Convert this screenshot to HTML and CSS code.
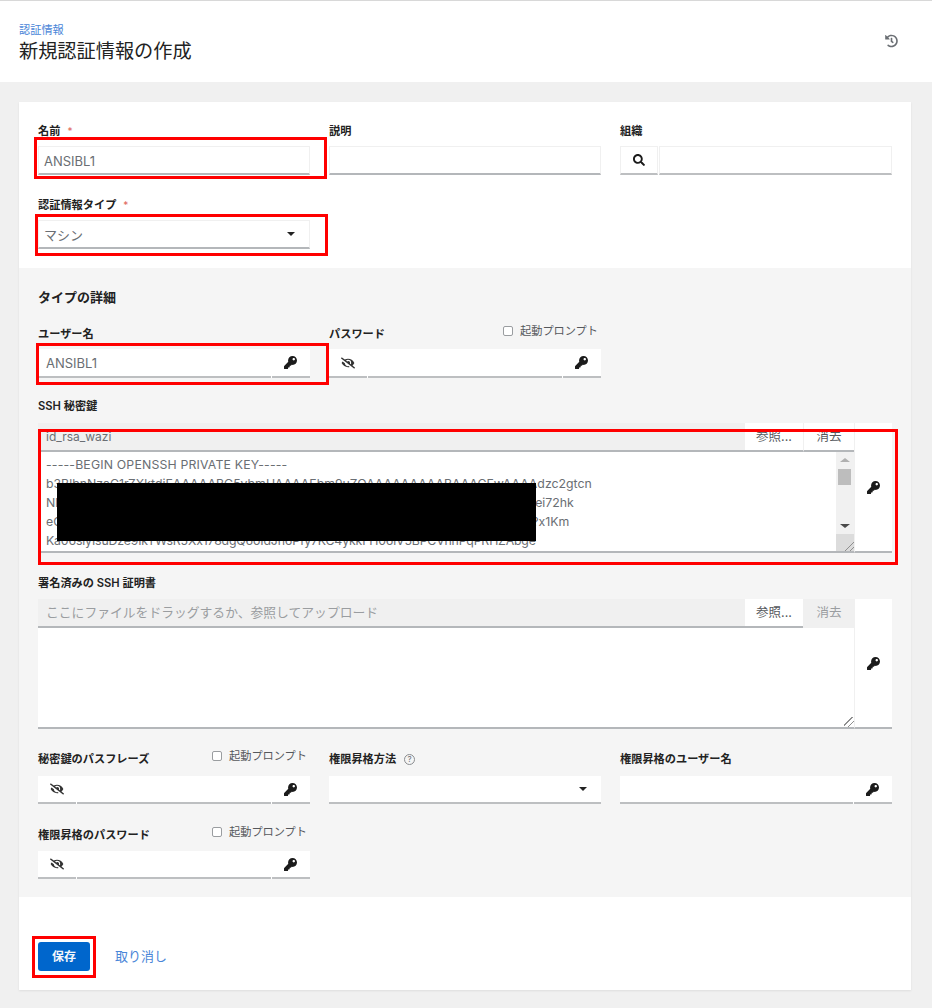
FILE: index.html
```html
<!DOCTYPE html>
<html lang="ja">
<head>
<meta charset="utf-8">
<title>新規認証情報の作成</title>
<link rel="stylesheet" href="styles.css">
</head>
<body>
<svg class="defs" aria-hidden="true">
  <symbol id="i-key" viewBox="0 0 512 512"><path d="M512 176.001C512 273.203 433.202 352 336 352c-11.22 0-22.19-1.062-32.827-3.069l-24.012 27.014A23.999 23.999 0 0 1 261.223 384H224v40c0 13.255-10.745 24-24 24h-40v40c0 13.255-10.745 24-24 24H24c-13.255 0-24-10.745-24-24v-78.059c0-6.365 2.529-12.47 7.029-16.971l161.802-161.802C163.108 213.814 160 195.271 160 176 160 78.798 238.797.001 335.999 0 433.488-.001 512 78.511 512 176.001zM336 128c0 26.51 21.49 48 48 48s48-21.49 48-48-21.49-48-48-48-48 21.49-48 48z"/></symbol>
  <symbol id="i-eye" viewBox="0 0 640 512"><path d="M320 400c-75.85 0-137.25-58.71-142.9-133.11L72.2 185.82c-13.79 17.3-26.48 35.59-36.72 55.59a32.35 32.35 0 0 0 0 29.19C89.71 376.41 197.07 448 320 448c26.91 0 52.87-4 77.89-10.46L346 397.39a144.13 144.13 0 0 1-26 2.61zm313.82 58.1l-110.55-85.44a331.25 331.25 0 0 0 81.25-102.07 32.35 32.35 0 0 0 0-29.19C550.29 135.59 442.93 64 320 64a308.15 308.15 0 0 0-147.32 37.7L45.46 3.37A16 16 0 0 0 23 6.18L3.37 31.45A16 16 0 0 0 6.18 53.9l588.36 454.73a16 16 0 0 0 22.46-2.81l19.64-25.27a16 16 0 0 0-2.82-22.45zm-183.72-142l-39.3-30.38A94.75 94.75 0 0 0 416 256a94.76 94.76 0 0 0-121.31-92.21A47.65 47.65 0 0 1 304 192a46.64 46.64 0 0 1-1.54 10l-73.61-56.89A142.31 142.31 0 0 1 320 112a143.92 143.92 0 0 1 144 144c0 21.63-5.29 41.79-13.9 60.11z"/></symbol>
  <symbol id="i-search" viewBox="0 0 512 512"><path d="M505 442.7L405.3 343c-4.5-4.5-10.6-7-17-7H372c27.6-35.3 44-79.7 44-128C416 93.1 322.9 0 208 0S0 93.1 0 208s93.1 208 208 208c48.3 0 92.7-16.4 128-44v16.3c0 6.4 2.5 12.5 7 17l99.7 99.7c9.4 9.4 24.6 9.4 33.9 0l28.3-28.3c9.4-9.4 9.4-24.6.1-34zM208 336c-70.7 0-128-57.2-128-128 0-70.7 57.2-128 128-128 70.7 0 128 57.2 128 128 0 70.7-57.2 128-128 128z"/></symbol>
  <symbol id="i-history" viewBox="0 0 512 512"><path d="M504 255.531c.253 136.64-111.18 248.372-247.82 248.468-59.015.042-113.223-20.53-155.822-54.911-11.077-8.94-11.905-25.541-1.839-35.607l11.267-11.267c8.609-8.609 22.353-9.551 31.891-1.984C173.062 425.135 212.781 440 256 440c101.705 0 184-82.311 184-184 0-101.705-82.311-184-184-184-48.814 0-93.149 18.969-126.068 49.932l50.754 50.754c10.08 10.08 2.941 27.314-11.313 27.314H24c-8.837 0-16-7.163-16-16V38.627c0-14.254 17.234-21.393 27.314-11.314l49.372 49.372C129.209 34.136 189.552 8 256 8c136.81 0 247.747 110.78 248 247.531zm-180.912 78.784l9.823-12.63c8.138-10.463 6.253-25.542-4.21-33.679L288 256.349V152c0-13.255-10.745-24-24-24h-16c-13.255 0-24 10.745-24 24v135.651l65.409 50.874c10.463 8.137 25.541 6.253 33.679-4.21z"/></symbol>
</svg>

<header class="page-header">
  <div>
    <a class="crumb">認証情報</a>
    <h1 class="title">新規認証情報の作成</h1>
  </div>
  <svg class="history"><use href="#i-history"/></svg>
</header>

<main class="main">
  <div class="card">
    <section class="top grid">
      <div class="field">
        <div class="label-row tight"><label class="label">名前<span class="req">*</span></label></div>
        <div class="control bordered">
          <div class="input">ANSIBL1</div>
          <span class="mark mark-name"></span>
        </div>
      </div>
      <div class="field">
        <div class="label-row tight"><label class="label">説明</label></div>
        <div class="control bordered"><div class="input"></div></div>
      </div>
      <div class="field">
        <div class="label-row tight"><label class="label">組織</label></div>
        <div class="control">
          <div class="btn bordered"><svg class="ico ico-search"><use href="#i-search"/></svg></div>
          <div class="input bordered"></div>
        </div>
      </div>
      <div class="field next-row start">
        <div class="label-row tight"><label class="label">認証情報タイプ<span class="req">*</span></label></div>
        <div class="control bordered">
          <div class="input select">マシン<span class="caret"></span></div>
          <span class="mark mark-type"></span>
        </div>
      </div>
    </section>

    <section class="details">
      <h2 class="section-title">タイプの詳細</h2>
      <div class="grid">
        <div class="field">
          <div class="label-row tight"><label class="label">ユーザー名</label></div>
          <div class="control">
            <div class="input user-value">ANSIBL1</div>
            <div class="btn"><svg class="ico"><use href="#i-key"/></svg></div>
            <span class="mark mark-user"></span>
          </div>
        </div>
        <div class="field">
          <div class="label-row tight">
            <label class="label">パスワード</label>
            <span class="prompt"><span class="check"></span>起動プロンプト</span>
          </div>
          <div class="control">
            <div class="btn"><svg class="ico ico-eye"><use href="#i-eye"/></svg></div>
            <div class="input"></div>
            <div class="btn"><svg class="ico"><use href="#i-key"/></svg></div>
          </div>
        </div>

        <div class="field wide gap-ssh">
          <div class="label-row loose"><label class="label">SSH 秘密鍵</label></div>
          <div class="filebox">
            <div class="filemain">
              <div class="filebar">
                <div class="filename has-file">id_rsa_wazi</div>
                <div class="filebtn">参照...</div>
                <div class="filebtn">消去</div>
              </div>
              <div class="textarea">
                <div class="keytext">
                  <div class="keyline key-head">-----BEGIN OPENSSH PRIVATE KEY-----</div>
                  <div class="keyline">b3BlbnNzaC1rZXktdjEAAAAABG5vbmUAAAAEbm9uZQAAAAAAAAABAAACFwAAAAdzc2gtcn</div>
                  <div class="keyline">Nl<span class="redact-gap"></span>Lei72hk</div>
                  <div class="keyline">eC<span class="redact-gap"></span>?x1Km</div>
                  <div class="keyline key-tail">Ka06slyIsuDze9IkTWsR5Xx178dgQ6oIdJh6Pfy7KC4ykkFH06lV5BPCVhnPqPRHZAbge</div>
                </div>
                <div class="scrollbar">
                  <span class="arrow-up"></span>
                  <span class="thumb"></span>
                  <span class="arrow-down"></span>
                  <span class="corner"></span>
                </div>
              </div>
            </div>
            <div class="btn sidekey"><svg class="ico"><use href="#i-key"/></svg></div>
            <span class="redaction"></span>
            <span class="mark mark-ssh"></span>
          </div>
        </div>

        <div class="field wide gap-row">
          <div class="label-row"><label class="label">署名済みの SSH 証明書</label></div>
          <div class="filebox">
            <div class="filemain">
              <div class="filebar">
                <div class="filename">ここにファイルをドラッグするか、参照してアップロード</div>
                <div class="filebtn">参照...</div>
                <div class="filebtn disabled">消去</div>
              </div>
              <div class="textarea blank"><span class="grip"></span></div>
            </div>
            <div class="btn sidekey"><svg class="ico"><use href="#i-key"/></svg></div>
          </div>
        </div>

        <div class="field gap-row">
          <div class="label-row loose">
            <label class="label">秘密鍵のパスフレーズ</label>
            <span class="prompt"><span class="check"></span>起動プロンプト</span>
          </div>
          <div class="control low">
            <div class="btn"><svg class="ico ico-eye"><use href="#i-eye"/></svg></div>
            <div class="input"></div>
            <div class="btn"><svg class="ico"><use href="#i-key"/></svg></div>
          </div>
        </div>
        <div class="field gap-row">
          <div class="label-row loose">
            <label class="label">権限昇格方法<span class="help">?</span></label>
          </div>
          <div class="control low">
            <div class="input select"><span class="caret"></span></div>
          </div>
        </div>
        <div class="field gap-row">
          <div class="label-row loose"><label class="label">権限昇格のユーザー名</label></div>
          <div class="control low">
            <div class="input"></div>
            <div class="btn"><svg class="ico"><use href="#i-key"/></svg></div>
          </div>
        </div>

        <div class="field gap-last start">
          <div class="label-row">
            <label class="label">権限昇格のパスワード</label>
            <span class="prompt"><span class="check"></span>起動プロンプト</span>
          </div>
          <div class="control low">
            <div class="btn"><svg class="ico ico-eye"><use href="#i-eye"/></svg></div>
            <div class="input"></div>
            <div class="btn"><svg class="ico"><use href="#i-key"/></svg></div>
          </div>
        </div>
      </div>
    </section>

    <footer class="actions">
      <div class="save-wrap">
        <button class="save">保存</button>
        <span class="mark mark-save"></span>
      </div>
      <a class="cancel">取り消し</a>
    </footer>
  </div>
</main>
</body>
</html>
```
FILE: styles.css
```css
* { box-sizing: border-box; }
html, body { margin: 0; height: 100%; }
body {
  background: #f0f0f0;
  font-family: Inter, "Noto Sans CJK JP", "Noto Sans", sans-serif;
  color: #151515;
  overflow: hidden;
}
.defs { display: none; }

.page-header {
  height: 82px;
  background: #fff;
  border-top: 1px solid #d8d8d8;
  padding: 22px 34px 0 19px;
  display: flex;
  justify-content: space-between;
}
.crumb { display: block; font-size: 11.2px; line-height: 14px; color: #4a86d8; }
.title { margin: 1px 0 0; font-size: 19.2px; line-height: 26px; font-weight: 400; color: #222; }
.history { width: 13px; height: 14px; margin-top: 11px; fill: #6a6e73; }

.main { padding: 20px 21px 18px 19px; }
.card { background: #fff; box-shadow: 0 1px 2px rgba(3, 3, 3, .08); height: 888px; }

.grid { display: grid; grid-template-columns: repeat(3, 272px); column-gap: 19px; align-items: start; }
.top { padding: 21px 19px 19px; height: 166px; }
.details { background: #f5f5f5; padding: 20px 19px 19px; height: 629px; }
.section-title { margin: 0 0 20px; font-size: 13px; line-height: 18px; font-weight: 600; color: #222; }

.field { min-width: 0; }
.next-row { margin-top: 22px; }
.start { grid-column: 1; }
.wide { grid-column: 1 / -1; }
.gap-ssh { margin-top: 20px; }
.gap-row { margin-top: 22px; }
.gap-last { margin-top: 23px; }

.label-row { height: 16px; margin-bottom: 8px; display: flex; justify-content: space-between; align-items: flex-start; }
.label-row.tight { margin-bottom: 7px; }
.label-row.loose { margin-bottom: 9px; }
.label { display: flex; align-items: center; font-size: 11.2px; line-height: 16px; font-weight: 600; color: #222; }
.req { color: #e0665c; margin-left: 7px; font-size: 10px; font-weight: 400; }
.help {
  width: 11px; height: 11px; margin-left: 8px;
  border: 1px solid #8a8d90; border-radius: 50%;
  color: #6a6e73; font-size: 8px; line-height: 9px; text-align: center; font-weight: 400;
}
.prompt {
  display: flex; align-items: center; gap: 7px;
  margin: -3px 3px 0 0;
  font-size: 11.2px; line-height: 16px; color: #55585c;
}
.check { width: 10px; height: 10px; background: #fff; border: 1px solid #9a9da0; border-radius: 2px; }

.control { position: relative; display: flex; height: 29px; background: #fff; }
.control.low { height: 28px; }
.bordered { border: 1px solid #f0f0f0; border-bottom: 2px solid #b4b7ba; }
.input {
  flex: 1; min-width: 0; height: 100%;
  padding: 0 5px;
  background: #fff;
  border-bottom: 2px solid #bdbfc1;
  font-size: 13px; line-height: 29px; color: #6a6e73;
}
.user-value { padding-left: 8px; }
.control.bordered > .input { border-bottom: 0; line-height: 28px; }
.select { position: relative; }
.caret {
  position: absolute; right: 14px; top: 50%; margin-top: -2px;
  border-left: 4.5px solid transparent; border-right: 4.5px solid transparent; border-top: 4.5px solid #222;
}
.btn {
  flex: none; width: 38px; height: 100%;
  display: flex; align-items: center; justify-content: center;
  background: #fff;
  border-bottom: 2px solid #bdbfc1;
  margin-left: 1px;
}
.btn:first-child { margin-left: 0; margin-right: 1px; }
.ico { width: 13px; height: 13px; margin-right: 1px; fill: #1b1b1b; }
.ico-eye { width: 14px; height: 12px; margin-right: 0; fill: #333; }
.ico-search { width: 12px; height: 12px; margin-right: 0; }

.filebox { position: relative; display: flex; height: 130px; }
.filemain { flex: 1; min-width: 0; display: flex; flex-direction: column; }
.filebar { display: flex; height: 29px; background: #f0f0f0; border-bottom: 2px solid #b4b7ba; }
.filename { flex: 1; padding-left: 8px; font-size: 12.8px; line-height: 28px; color: #9a9da0; }
.filename.has-file { color: #6a6e73; font-size: 12px; }
.filebtn { width: 58px; height: 29px; background: #fff; border-bottom: 2px solid #b4b7ba; text-align: center; font-size: 12.5px; line-height: 27px; color: #55585c; }
.filebtn + .filebtn { width: 51px; border-left: 1px solid #f0f0f0; }
.filebtn.disabled { background: #f0f0f0; color: #9a9da0; border-bottom: 0; }
.sidekey { width: 38px; height: 130px; margin: 0; border-left: 1px solid #f0f0f0; border-bottom: 2px solid #b4b7ba; }

.textarea { position: relative; flex: 1; display: flex; background: #fff; border-bottom: 2px solid #b4b7ba; overflow: hidden; }
.keytext { flex: 1; min-width: 0; padding: 3px 0 0 8px; font-size: 12.3px; line-height: 19px; color: #6a6e73; overflow: hidden; }
.keyline { height: 19px; white-space: nowrap; }
.key-head { letter-spacing: .17px; }
.key-tail { letter-spacing: -.16px; }
.redact-gap { display: inline-block; width: 470px; }
.scrollbar { position: relative; flex: none; width: 18px; background: #f1f1f1; }
.arrow-up, .arrow-down { position: absolute; left: 4px; border-left: 5px solid transparent; border-right: 5px solid transparent; }
.arrow-up { top: 6px; border-bottom: 4px solid #b0b0b0; }
.arrow-down { top: 72px; border-top: 4px solid #4a4a4a; }
.thumb { position: absolute; left: 2px; top: 17px; width: 13px; height: 16px; background: #bdbdbd; }
.corner {
  position: absolute; right: 0; bottom: 0; width: 18px; height: 17px;
  background: linear-gradient(135deg, #dcdcdc 0 72%, #8f8f8f 72% 75%, #dcdcdc 75% 86%, #8f8f8f 86% 89%, #dcdcdc 89%);
}
.grip {
  position: absolute; right: 0; bottom: 0; width: 10px; height: 10px;
  background: linear-gradient(135deg, #fff 0 40%, #8f8f8f 40% 48%, #fff 48% 66%, #8f8f8f 66% 74%, #fff 74%);
}

.redaction { position: absolute; left: 19px; top: 60px; width: 479px; height: 58px; background: #000; z-index: 2; }
.mark { position: absolute; border: 3px solid #f00; z-index: 3; pointer-events: none; }
.mark-name { inset: -10px -18px -6px -5px; }
.mark-type { inset: -7px -19px -9px -4px; }
.mark-user { inset: -6px -19px -7px -2px; }
.mark-ssh { inset: 6px -6px -12px 0; }
.mark-save { inset: -6px -6px -7px; }

.actions { display: flex; align-items: center; gap: 25px; height: 93px; padding: 45px 19px 19px; background: #fff; }
.save-wrap { position: relative; height: 29px; }
.save { display: block; width: 52px; height: 29px; padding: 0; border: 0; border-radius: 3px; background: #06c; color: #f4f7fb; font: 600 12px/29px Inter, "Noto Sans CJK JP", sans-serif; }
.cancel { font-size: 13px; line-height: 29px; color: #4a86d8; }
```
